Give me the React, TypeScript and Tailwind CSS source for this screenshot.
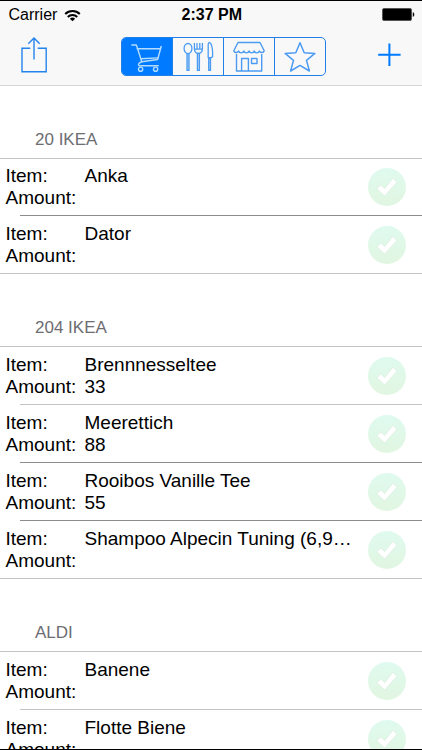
import { ReactNode } from "react";
import clsx from "clsx";

type Entry = { item: string; amount?: string; dark?: boolean; short?: boolean };
type Section = { title: string; entries: Entry[] };

const SECTIONS: Section[] = [
  {
    title: "20 IKEA",
    entries: [{ item: "Anka", dark: true, short: true }, { item: "Dator" }],
  },
  {
    title: "204 IKEA",
    entries: [
      { item: "Brennnesseltee", amount: "33" },
      { item: "Meerettich", amount: "88", dark: true },
      { item: "Rooibos Vanille Tee", amount: "55", dark: true },
      { item: "Shampoo Alpecin Tuning (6,9…" },
    ],
  },
  {
    title: "ALDI",
    entries: [{ item: "Banene" }, { item: "Flotte Biene" }],
  },
];

function WifiIcon() {
  return (
    <svg width="17" height="13" viewBox="0 0 18 13" fill="none" stroke="#000" strokeWidth="2.2">
      <path d="M1.3 4.8a11 11 0 0 1 15.4 0" />
      <path d="M4 8a7.2 7.2 0 0 1 10 0" />
      <path d="M9 12.6 6.2 9.9a4 4 0 0 1 5.6 0z" fill="#000" stroke="none" />
    </svg>
  );
}

function BatteryIcon() {
  return (
    <svg width="33" height="14" viewBox="0 0 33 14">
      <rect x="0.5" y="0.5" width="29" height="12" rx="1.5" fill="#000" stroke="#555" />
      <path d="M31 4.5c1.3.3 1.3 3.7 0 4z" fill="#000" stroke="#000" strokeWidth="0.5" />
    </svg>
  );
}

function ShareIcon() {
  return (
    <svg width="28" height="38" viewBox="0 0 28 38" fill="none" stroke="#2384ee" strokeWidth="1.4">
      <path d="M10.3 11.2H2v23.6h24.2V11.2h-8.5" />
      <path d="M14 22.5V1M8.3 6.7 14 1l5.7 5.7" />
    </svg>
  );
}

function CartIcon() {
  return (
    <svg width="34" height="32" viewBox="0 0 34 32" fill="none" stroke="#b4dcff" strokeWidth="1.4" strokeLinecap="round" strokeLinejoin="round">
      <path d="M1.8 4h4.6l5.4 16.8c-2.6.7-4.4 3-2.4 4h18.8" />
      <path d="M7.2 7.7h23l1-2.2-3.6 13-15.8 2.3" />
      <path d="M10.8 17.8l17.4-.9" />
      <circle cx="10.6" cy="28.2" r="2.1" />
      <circle cx="25.6" cy="28.2" r="2.1" />
    </svg>
  );
}

function CutleryIcon() {
  return (
    <svg width="32" height="32" viewBox="0 0 32 32" fill="none" stroke="#4b9bf2" strokeWidth="1.3" strokeLinejoin="round">
      <ellipse cx="6" cy="7.6" rx="3.9" ry="5.1" />
      <path d="M5 12.6h2v16.8H5z" fill="#b3d4f7" />
      <path d="M12.4 2v5.5c0 3 1.5 4.4 3 4.9h2c1.6-.5 3-2 3-4.9V2M15 2v6.2M17.8 2v6.2M12.4 8.2h8" />
      <path d="M15.4 12.4h2v17h-2z" fill="#b3d4f7" />
      <path d="M26.2 16.7V3.6c0-2.2 1.4-2.6 2.5-1.2 1.4 2.3 2.1 8.3 1.9 13.4-1.3 1.1-3.1 1.3-4.4.9z" />
      <path d="M26.7 17h1.8v12.4h-1.8z" fill="#b3d4f7" />
    </svg>
  );
}

function ShopIcon() {
  return (
    <svg width="34" height="32" viewBox="0 0 34 32" fill="none" stroke="#4b9bf2" strokeWidth="1.4" strokeLinejoin="round">
      <path d="M6 1.5h22l4.2 8.2c-.6 2.2-3.8 2.4-4.8.4-1 2.3-4.2 2.3-5.2 0-1 2.3-4.2 2.3-5.2 0-1 2.3-4.2 2.3-5.2 0-1 2.3-4.2 2.3-5.2 0-1 2-4.2 1.8-4.8-.4z" />
      <path d="M4.5 13v17h25.2V13" />
      <path d="M9.6 30V17.5h6.8V30M19.5 17.5h5.5v5h-5.5z" />
    </svg>
  );
}

function StarIcon() {
  return (
    <svg width="34" height="32" viewBox="0 0 34 32" fill="none" stroke="#4b9bf2" strokeWidth="1.5" strokeLinejoin="round">
      <path d="m17 1.8 4.2 9.9 10.7.7-8.4 7 2.9 10.6L17 24.4l-9.4 5.6 2.9-10.6-8.4-7 10.7-.7z" />
    </svg>
  );
}

function CheckBadge() {
  return (
    <svg width="38" height="38" viewBox="0 0 38 38">
      <defs>
        <linearGradient id="badge" x1="0" y1="0" x2="0" y2="1">
          <stop offset="0" stopColor="#dffaef" />
          <stop offset="1" stopColor="#e1f6e1" />
        </linearGradient>
      </defs>
      <circle cx="19" cy="19" r="19" fill="url(#badge)" />
      <path d="m8.8 20.8 4-3.7 4 3.5 8.1-10.4 4 4.1-12.2 13.6z" fill="#fff" stroke="#d9e8dc" strokeWidth="0.6" />
    </svg>
  );
}

function Segment({ active, children }: { active?: boolean; children: ReactNode }) {
  return (
    <button
      className={clsx(
        "flex flex-1 items-center justify-center border-[#2180e8]",
        active ? "bg-[#007aff]" : "border-l first:border-l-0"
      )}
    >
      {children}
    </button>
  );
}

function Row({ entry, last }: { entry: Entry; last: boolean }) {
  return (
    <div className={clsx("relative flex shrink-0 pl-[5.5px]", entry.short ? "h-[57px] pt-[6px]" : "h-[58px] pt-[7px]")}>
      <div className="w-[79px] shrink-0 text-[19px] leading-[22px]">
        <p>Item:</p>
        <p>Amount:</p>
      </div>
      <div className="w-[283.5px] shrink-0 whitespace-nowrap text-[19px] leading-[22px]">
        <p>{entry.item}</p>
        <p>{entry.amount}</p>
      </div>
      <div className="pt-[3px]">
        <CheckBadge />
      </div>
      {/* hairline under the row, inset unless it closes the section */}
      <div
        className={clsx(
          "absolute bottom-0 right-0 h-px",
          last ? "left-0" : "left-5",
          entry.dark ? "bg-[#8c8c8c]" : "bg-[#c4c4c4]"
        )}
      />
    </div>
  );
}

export default function App() {
  return (
    <div className="flex h-[750px] w-[422px] flex-col overflow-hidden border-y border-black bg-white font-['Liberation_Sans',Arial,sans-serif] text-black">
      <header className="h-[85px] shrink-0 border-b border-[#d6d6d6] bg-[#f8f8f8]">
        {/* Status bar */}
        <div className="grid h-[28px] grid-cols-3 items-center pl-[8.5px] pr-[7px] text-[16px]">
          <div className="flex items-center gap-[7px]">
            <span>Carrier</span>
            <WifiIcon />
          </div>
          <span className="text-center font-bold">2:37 PM</span>
          <div className="flex justify-end">
            <BatteryIcon />
          </div>
        </div>

        {/* Toolbar */}
        <div className="flex h-[56px] items-start pl-5 pr-[21px]">
          <button className="mt-[8px]">
            <ShareIcon />
          </button>
          <div className="ml-[73px] mt-[8px] flex h-[39px] w-[205px] overflow-hidden rounded-[5px] border border-[#2180e8]">
            <Segment active>
              <CartIcon />
            </Segment>
            <Segment>
              <CutleryIcon />
            </Segment>
            <Segment>
              <ShopIcon />
            </Segment>
            <Segment>
              <StarIcon />
            </Segment>
          </div>
          <button className="ml-auto mt-[14px]">
            <svg width="24" height="24" viewBox="0 0 24 24" stroke="#007aff" strokeWidth="2">
              <path d="M12.4 0.5v22.5M1.2 11.8h22.4" />
            </svg>
          </button>
        </div>
      </header>

      <main className="flex min-h-0 flex-1 flex-col overflow-hidden">
        {SECTIONS.map((section) => (
          <section key={section.title} className="shrink-0">
            <h2 className="flex h-[73px] items-end border-b border-[#c4c4c4] pb-[8px] pl-[35px] text-[17px] leading-[20px] text-[#6d6d72]">
              {section.title}
            </h2>
            {section.entries.map((entry, i) => (
              <Row key={entry.item} entry={entry} last={i === section.entries.length - 1} />
            ))}
          </section>
        ))}
      </main>
    </div>
  );
}
